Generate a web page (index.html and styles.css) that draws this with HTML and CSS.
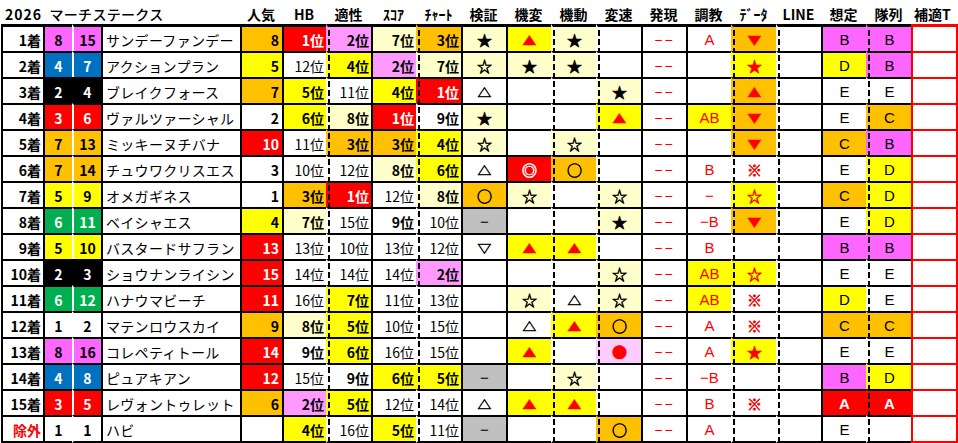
FILE: index.html
```html
<!DOCTYPE html>
<html lang="ja">
<head>
<meta charset="utf-8">
<title>2026 マーチステークス</title>
<link rel="stylesheet" href="styles.css">
</head>
<body>
<div class="sheet">
  <div class="hd">
    <div class="ttl"><span class="yr">2026</span> マーチステークス</div>
    <div>人気</div><div>HB</div><div>適性</div><div>ｽｺｱ</div><div>ﾁｬｰﾄ</div><div>検証</div><div>機変</div><div>機動</div><div>変速</div><div>発現</div><div>調教</div><div>ﾃﾞｰﾀ</div><div>LINE</div><div>想定</div><div>隊列</div><div class="hl">補適T</div>
  </div>

  <div class="r r0">
    <div class="c">1着</div><div class="c pk">8</div><div class="c pk">15</div><div class="c">サンデーファンデー</div><div class="c o">8</div>
    <div class="c rd b">1位</div><div class="c lp b">2位</div><div class="c ly b">7位</div><div class="c o b">3位</div>
    <div class="c ly">★</div><div class="c y tr"><span class="tri">▲</span></div><div class="c ly">★</div><div class="c"></div>
    <div class="c">−−</div><div class="c">A</div><div class="c o"><span class="tri">▼</span></div><div class="c"></div><div class="c pk">B</div><div class="c pk">B</div><div class="c"></div>
  </div>
  <div class="r">
    <div class="c">2着</div><div class="c bl">4</div><div class="c bl">7</div><div class="c">アクションプラン</div><div class="c y">5</div>
    <div class="c">12位</div><div class="c y b">4位</div><div class="c lp b">2位</div><div class="c ly b">7位</div>
    <div class="c ly">☆</div><div class="c ly">★</div><div class="c ly">★</div><div class="c"></div>
    <div class="c">−−</div><div class="c"></div><div class="c y">★</div><div class="c"></div><div class="c y">D</div><div class="c pk">B</div><div class="c"></div>
  </div>
  <div class="r">
    <div class="c">3着</div><div class="c bk">2</div><div class="c bk">4</div><div class="c">ブレイクフォース</div><div class="c o">7</div>
    <div class="c y b">5位</div><div class="c">11位</div><div class="c y b">4位</div><div class="c rd b">1位</div>
    <div class="c"><span class="tri">△</span></div><div class="c"></div><div class="c"></div><div class="c ly">★</div>
    <div class="c">−−</div><div class="c"></div><div class="c o"><span class="tri">▲</span></div><div class="c"></div><div class="c">E</div><div class="c">E</div><div class="c"></div>
  </div>
  <div class="r">
    <div class="c">4着</div><div class="c rd">3</div><div class="c rd">6</div><div class="c">ヴァルツァーシャル</div><div class="c">2</div>
    <div class="c y b">6位</div><div class="c ly b">8位</div><div class="c rd b">1位</div><div class="c b">9位</div>
    <div class="c ly">★</div><div class="c"></div><div class="c"></div><div class="c y tr"><span class="tri">▲</span></div>
    <div class="c">−−</div><div class="c y">AB</div><div class="c o"><span class="tri">▼</span></div><div class="c"></div><div class="c">E</div><div class="c o">C</div><div class="c"></div>
  </div>
  <div class="r">
    <div class="c">5着</div><div class="c o">7</div><div class="c o">13</div><div class="c">ミッキーヌチバナ</div><div class="c rd">10</div>
    <div class="c">11位</div><div class="c o b">3位</div><div class="c o b">3位</div><div class="c y b">4位</div>
    <div class="c ly">☆</div><div class="c"></div><div class="c ly">☆</div><div class="c"></div>
    <div class="c">−−</div><div class="c"></div><div class="c o"><span class="tri">▼</span></div><div class="c"></div><div class="c o">C</div><div class="c pk">B</div><div class="c"></div>
  </div>
  <div class="r">
    <div class="c">6着</div><div class="c o">7</div><div class="c o">14</div><div class="c">チュウワクリスエス</div><div class="c">3</div>
    <div class="c">10位</div><div class="c">12位</div><div class="c ly b">8位</div><div class="c y b">6位</div>
    <div class="c"><span class="tri">△</span></div><div class="c rd">◎</div><div class="c o">○</div><div class="c"></div>
    <div class="c">−−</div><div class="c">B</div><div class="c">※</div><div class="c"></div><div class="c">E</div><div class="c y">D</div><div class="c"></div>
  </div>
  <div class="r">
    <div class="c">7着</div><div class="c y">5</div><div class="c y">9</div><div class="c">オメガギネス</div><div class="c">1</div>
    <div class="c o b">3位</div><div class="c rd b">1位</div><div class="c">12位</div><div class="c ly b">8位</div>
    <div class="c o">○</div><div class="c ly">☆</div><div class="c"></div><div class="c ly">☆</div>
    <div class="c">−−</div><div class="c">−</div><div class="c y">☆</div><div class="c"></div><div class="c o">C</div><div class="c y">D</div><div class="c"></div>
  </div>
  <div class="r">
    <div class="c">8着</div><div class="c gr">6</div><div class="c gr">11</div><div class="c">ベイシャエス</div><div class="c y">4</div>
    <div class="c ly b">7位</div><div class="c">15位</div><div class="c b">9位</div><div class="c">10位</div>
    <div class="c gy mn">−</div><div class="c"></div><div class="c"></div><div class="c ly">★</div>
    <div class="c">−−</div><div class="c">−B</div><div class="c o"><span class="tri">▼</span></div><div class="c"></div><div class="c">E</div><div class="c y">D</div><div class="c"></div>
  </div>
  <div class="r">
    <div class="c">9着</div><div class="c y">5</div><div class="c y">10</div><div class="c">バスタードサフラン</div><div class="c rd">13</div>
    <div class="c">13位</div><div class="c">10位</div><div class="c">13位</div><div class="c">12位</div>
    <div class="c"><span class="tri">▽</span></div><div class="c y tr"><span class="tri">▲</span></div><div class="c y tr"><span class="tri">▲</span></div><div class="c"></div>
    <div class="c">−−</div><div class="c">B</div><div class="c"></div><div class="c"></div><div class="c pk">B</div><div class="c pk">B</div><div class="c"></div>
  </div>
  <div class="r">
    <div class="c">10着</div><div class="c bk">2</div><div class="c bk">3</div><div class="c">ショウナンライシン</div><div class="c rd">15</div>
    <div class="c">14位</div><div class="c">14位</div><div class="c">14位</div><div class="c lp b">2位</div>
    <div class="c"></div><div class="c"></div><div class="c"></div><div class="c ly">☆</div>
    <div class="c">−−</div><div class="c y">AB</div><div class="c y">☆</div><div class="c"></div><div class="c">E</div><div class="c">E</div><div class="c"></div>
  </div>
  <div class="r">
    <div class="c">11着</div><div class="c gr">6</div><div class="c gr">12</div><div class="c">ハナウマビーチ</div><div class="c rd">11</div>
    <div class="c">16位</div><div class="c y b">7位</div><div class="c">11位</div><div class="c">13位</div>
    <div class="c"></div><div class="c ly">☆</div><div class="c"><span class="tri">△</span></div><div class="c ly">☆</div>
    <div class="c">−−</div><div class="c y">AB</div><div class="c">※</div><div class="c"></div><div class="c y">D</div><div class="c">E</div><div class="c"></div>
  </div>
  <div class="r">
    <div class="c">12着</div><div class="c">1</div><div class="c">2</div><div class="c">マテンロウスカイ</div><div class="c o">9</div>
    <div class="c ly b">8位</div><div class="c y b">5位</div><div class="c">10位</div><div class="c">15位</div>
    <div class="c"></div><div class="c"><span class="tri">△</span></div><div class="c y tr"><span class="tri">▲</span></div><div class="c o">○</div>
    <div class="c">−−</div><div class="c">A</div><div class="c">※</div><div class="c"></div><div class="c o">C</div><div class="c o">C</div><div class="c"></div>
  </div>
  <div class="r">
    <div class="c">13着</div><div class="c pk">8</div><div class="c pk">16</div><div class="c">コレペティトール</div><div class="c rd">14</div>
    <div class="c b">9位</div><div class="c y b">6位</div><div class="c">16位</div><div class="c">15位</div>
    <div class="c"></div><div class="c y tr"><span class="tri">▲</span></div><div class="c"></div><div class="c pp tr">●</div>
    <div class="c">−−</div><div class="c">A</div><div class="c y">★</div><div class="c"></div><div class="c">E</div><div class="c">E</div><div class="c"></div>
  </div>
  <div class="r">
    <div class="c">14着</div><div class="c bl">4</div><div class="c bl">8</div><div class="c">ピュアキアン</div><div class="c rd">12</div>
    <div class="c">15位</div><div class="c b">9位</div><div class="c y b">6位</div><div class="c y b">5位</div>
    <div class="c gy mn">−</div><div class="c"></div><div class="c ly">☆</div><div class="c"></div>
    <div class="c">−−</div><div class="c">−B</div><div class="c"></div><div class="c"></div><div class="c pk">B</div><div class="c y">D</div><div class="c"></div>
  </div>
  <div class="r">
    <div class="c">15着</div><div class="c rd">3</div><div class="c rd">5</div><div class="c">レヴォントゥレット</div><div class="c o">6</div>
    <div class="c lp b">2位</div><div class="c y b">5位</div><div class="c">12位</div><div class="c">14位</div>
    <div class="c"><span class="tri">△</span></div><div class="c y tr"><span class="tri">▲</span></div><div class="c y tr"><span class="tri">▲</span></div><div class="c"></div>
    <div class="c">−−</div><div class="c">B</div><div class="c">※</div><div class="c"></div><div class="c rd b">A</div><div class="c rd b">A</div><div class="c"></div>
  </div>
  <div class="r last">
    <div class="c ex">除外</div><div class="c">1</div><div class="c">1</div><div class="c">ハビ</div><div class="c"></div>
    <div class="c y b">4位</div><div class="c">16位</div><div class="c y b">5位</div><div class="c">11位</div>
    <div class="c gy mn">−</div><div class="c"></div><div class="c"></div><div class="c o">○</div>
    <div class="c">−−</div><div class="c">A</div><div class="c"></div><div class="c"></div><div class="c">E</div><div class="c"></div><div class="c"></div>
  </div>
</div>
</body>
</html>
```
FILE: styles.css
```css
body {
  margin: 0;
  background: #fff;
  color: #000;
  font-family: "Noto Sans CJK JP", "DejaVu Sans", sans-serif;
  font-size: 14px;
}

.sheet {
  margin-left: 1px;
  width: 957px;
}

.hd,
.r {
  display: grid;
  grid-template-columns: 42px 29px 29px 139px 42px 44px repeat(13, 45px) 47px;
}

.hd {
  height: 24px;
}

.hd > div {
  box-sizing: border-box;
  height: 24px;
  padding-top: 2px;
  line-height: 24px;
  text-align: center;
  font-weight: 700;
  white-space: nowrap;
}

.hd .ttl {
  grid-column: 1 / 5;
  text-align: left;
  padding-left: 4px;
  font-weight: 500;
  letter-spacing: 0.3px;
}

.hd .ttl .yr {
  font-weight: 700;
  letter-spacing: 1px;
  margin-right: 4px;
}

.hd .hl {
  text-align: left;
  padding-left: 3px;
}

.c {
  box-sizing: border-box;
  height: 26px;
  border-top: 2px solid #000;
  border-left: 2px solid #000;
  line-height: 26px;
  white-space: nowrap;
}

.r0 .c {
  height: 27px;
  border-top-width: 3px;
}

.last .c {
  height: 28px;
  border-bottom: 2px solid #000;
}

/* column alignment */
.r .c:nth-child(1) {
  text-align: right;
  padding-right: 2px;
  font-weight: 700;
}

.r .c:nth-child(2),
.r .c:nth-child(3) {
  text-align: center;
  font-weight: 700;
}

.r .c:nth-child(3) {
  border-left-color: #fff;
}

.r .c.bk:nth-child(3) {
  border-left-color: #000;
}

.r .c:nth-child(4) {
  padding-left: 3px;
  letter-spacing: 0.3px;
}

.r .c:nth-child(5) {
  text-align: right;
  padding-right: 3px;
  font-weight: 700;
}

.r .c:nth-child(6),
.r .c:nth-child(7),
.r .c:nth-child(8),
.r .c:nth-child(9) {
  text-align: right;
  padding-right: 2px;
}

.r .c:nth-child(n+10) {
  text-align: center;
}

.r .c:nth-child(10),
.r .c:nth-child(11),
.r .c:nth-child(12),
.r .c:nth-child(13),
.r .c:nth-child(16) {
  font-size: 15px;
  -webkit-text-stroke: 0.6px currentColor;
}

.tri {
  display: inline-block;
  transform: scale(0.92, 0.78);
}

/* dashed separators */
.r .c:nth-child(7),
.r .c:nth-child(9),
.r .c:nth-child(12),
.r .c:nth-child(13),
.r .c:nth-child(16),
.r .c:nth-child(17),
.r .c:nth-child(19) {
  border-left-color: transparent;
  background-image: repeating-linear-gradient(to bottom, #000 0 6px, transparent 6px 9px);
  background-size: 2px 24px;
  background-position: 0 2px;
  background-repeat: no-repeat;
}

.r0 .c:nth-child(7),
.r0 .c:nth-child(9),
.r0 .c:nth-child(12),
.r0 .c:nth-child(13),
.r0 .c:nth-child(16),
.r0 .c:nth-child(17),
.r0 .c:nth-child(19) {
  background-position: 0 3px;
}

/* red column */
.r .c:nth-child(20) {
  border-left-color: #f00;
  border-top-color: #f00;
  border-right: 2px solid #f00;
}

.last .c:nth-child(20) {
  border-bottom-color: #f00;
}

/* text colour by column */
.r .c:nth-child(14) {
  color: #f00;
  font-family: "Liberation Sans", sans-serif;
  letter-spacing: 2px;
  font-size: 14px;
}

.r .c:nth-child(15),
.r .c:nth-child(16) {
  color: #f00;
}

.r .c:nth-child(15) {
  font-family: "Liberation Sans", sans-serif;
  font-weight: 500;
  font-size: 15px;
}

.r .c:nth-child(18),
.r .c:nth-child(19) {
  font-family: "Liberation Sans", sans-serif;
  font-size: 15px;
}

.mn {
  font-family: "Liberation Sans", sans-serif;
}

.r .c.mn {
  -webkit-text-stroke: 0;
}

.ex {
  color: #f00;
}

.b {
  font-weight: 700;
}

.tr {
  color: #f00;
}

/* fills */
.o { background-color: #ffc000; }
.y { background-color: #ffff00; }
.rd { background-color: #ff0000; color: #fff; }
.r .c.rd { color: #fff; }
.pk { background-color: #ff66ff; }
.lp { background-color: #ff99ff; }
.ly { background-color: #ffffcc; }
.bl { background-color: #0070c0; color: #fff; }
.gr { background-color: #00b050; color: #fff; }
.bk { background-color: #000; color: #fff; }
.gy { background-color: #c0c0c0; }
.pp { background-color: #ffccff; }
.r .c.pp { color: #f00; }
```
